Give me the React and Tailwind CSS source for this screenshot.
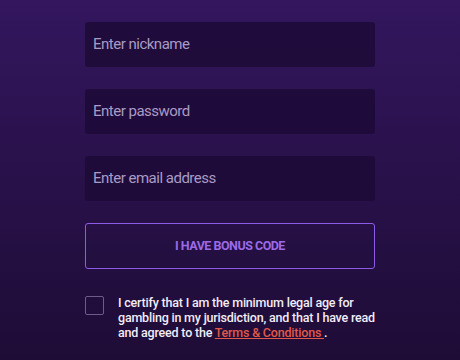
export default function App() {
  const fields = ['Enter nickname', 'Enter password', 'Enter email address'];
  return (
    <div
      className="flex h-[360px] w-[460px] justify-center overflow-hidden bg-gradient-to-b from-[#33165e] to-[#1e0c36] pt-[22px]"
      style={{ fontFamily: 'Roboto, "Noto Sans", sans-serif' }}
    >
      <div className="flex w-[290px] flex-col">
        {fields.map((f) => (
          <div
            key={f}
            className="mb-[22px] flex h-[45px] items-center rounded-[3px] bg-[#1e0b38]/90 px-[8px] text-[15px] tracking-[-0.5px] text-[#a99bc4]"
          >
            {f}
          </div>
        ))}
        <button className="flex h-[46px] items-center justify-center rounded-[3px] border border-[#8e5ae8] text-[12.5px] font-bold tracking-[-0.5px] text-[#9c6ae6]">
          I HAVE BONUS CODE
        </button>
        <div className="mt-[26px] flex gap-[14px]">
          <div className="mt-[1px] h-[19px] w-[19px] shrink-0 rounded-[2px] border border-[#6e5a8c]" />
          <p className="text-[12.5px] font-medium leading-[15px] tracking-[-0.2px] text-[#f1ecf7]">
            I certify that I am the minimum legal age for gambling in my jurisdiction, and that I have read and agreed to the{' '}
            <a className="text-[#e0594a] underline">Terms &amp; Conditions </a>.
          </p>
        </div>
      </div>
    </div>
  );
}
